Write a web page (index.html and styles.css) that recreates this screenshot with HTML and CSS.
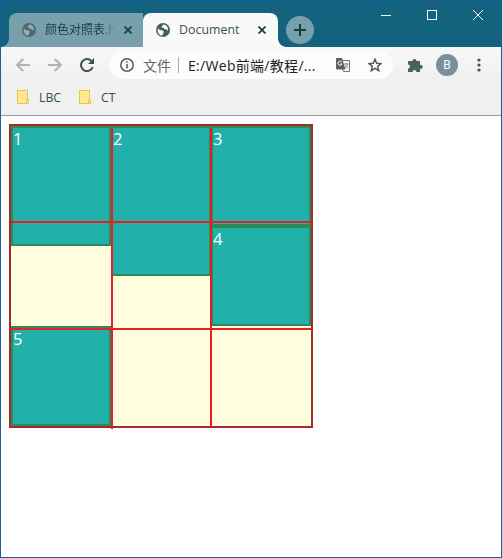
FILE: index.html
```html
<!DOCTYPE html>
<html lang="zh-CN">
<head>
<meta charset="utf-8">
<title>Document</title>
<link rel="stylesheet" href="styles.css">
</head>
<body>
<svg class="defs" width="0" height="0">
  <symbol id="globe" viewBox="0 0 14 14"><circle cx="7" cy="7" r="7" fill="currentColor"/><path class="land" d="M1.7 5.3 4.2 7.2h2.3l1 1.3v1.3L6.2 12.6C3.2 12.6 1.2 9.6 1.7 5.3zM7.4 1.5 5.8 3.4v1.4h2l.8 1.5h1.8l1.3 1.6c1-3.2-1-6-4.3-6.4z"/></symbol>
  <symbol id="cross" viewBox="0 0 8 8"><path d="M.5.5l7 7m0-7-7 7" stroke="currentColor" stroke-width="1.7"/></symbol>
  <symbol id="folder" viewBox="0 0 12 14"><path d="M.5.5h10v9h1v4H.5z" fill="#ffe793" stroke="#e8c545"/><path d="M9.5 13V9.5" stroke="#e8c545"/></symbol>
</svg>
<div class="window">
  <header class="titlebar">
    <div class="tab inactive">
      <svg class="globe"><use href="#globe"/></svg>
      <span class="title fade">颜色对照表.h</span>
      <svg class="close"><use href="#cross"/></svg>
    </div>
    <div class="tab active">
      <svg class="globe"><use href="#globe"/></svg>
      <span class="title">Document</span>
      <svg class="close"><use href="#cross"/></svg>
    </div>
    <div class="newtab"><svg width="12" height="12" viewBox="0 0 12 12"><path d="M6 0v12M0 6h12" stroke="#193d3d" stroke-width="2"/></svg></div>
    <div class="controls">
      <svg width="10" height="10" viewBox="0 0 10 10"><path d="M0 5.5h10"/></svg>
      <svg width="10" height="10" viewBox="0 0 10 10"><path d="M.5.5h9v9h-9z"/></svg>
      <svg width="10" height="10" viewBox="0 0 10 10"><path d="M0 0l10 10M10 0 0 10"/></svg>
    </div>
  </header>
  <div class="chrome">
    <div class="toolbar">
      <svg class="nav" width="14" height="14" viewBox="0 0 14 14"><path d="M14 7H1.5M7.2 1 1.2 7l6 6"/></svg>
      <svg class="nav" width="14" height="14" viewBox="0 0 14 14"><path d="M0 7h12.5M6.8 1l6 6-6 6"/></svg>
      <svg class="reload" width="14" height="14" viewBox="0 0 14 14"><path d="M11.5 3.1A6 6 0 1 0 12.7 9" fill="none" stroke="#40534f" stroke-width="2"/><path d="M14 0v6H8z" fill="#40534f"/></svg>
      <div class="address">
        <svg class="info" width="14" height="14" viewBox="0 0 14 14" fill="none" stroke="#555a5c" stroke-width="1.5"><circle cx="7" cy="7" r="6.2"/><path d="M7 6v4.5M7 3.2v1.6"/></svg>
        <span class="scheme">文件</span>
        <span class="divider"></span>
        <span class="url">E:/Web前端/教程/...</span>
        <svg class="translate" width="14" height="14" viewBox="0 0 14 14"><path d="M6 2.5h7.5v11H7.5L6 10" fill="#fafafa" stroke="#777"/><path d="M1 0h5l3.5 11.5H1a1 1 0 0 1-1-1V1a1 1 0 0 1 1-1z" fill="#5c6063"/><path d="M5.8 4A2.1 2.1 0 1 0 6 6H4.2" fill="none" stroke="#fff"/><path d="M8 6h4.500M10.2 5v1M11.700 6c-.3 1.800-1.300 2.900-2.500 3.700M9 7.200l3 3" fill="none" stroke="#666" stroke-width=".8"/></svg>
        <svg class="star" width="14" height="14" viewBox="0 0 14 14"><path d="M7 1.200l1.700 4 4.300.4-3.300 2.800 1 4.300L7 10.400l-3.700 2.300 1-4.300L1 5.600l4.300-.4z" fill="none" stroke="#555a5c" stroke-width="1.500"/></svg>
      </div>
      <svg class="puzzle" width="15" height="15" viewBox="0 0 15 15"><path d="M1 3h3.500a2 2 0 1 1 4 0H12v4h.8a1.900 1.900 0 0 1 0 3.800H12V14H8.500a2 2 0 0 0-4 0H0v-3.500a2 2 0 0 0 0-4V4a1 1 0 0 1 1-1z" fill="#4b625b"/></svg>
      <span class="avatar">B</span>
      <svg class="more" width="4" height="14" viewBox="0 0 4 14"><g fill="#40534f"><circle cx="2" cy="2" r="1.600"/><circle cx="2" cy="7" r="1.600"/><circle cx="2" cy="12" r="1.600"/></g></svg>
    </div>
    <nav class="bookmarks">
      <svg width="12" height="14"><use href="#folder"/></svg><span class="lbc">LBC</span>
      <svg width="12" height="14"><use href="#folder"/></svg><span>CT</span>
    </nav>
  </div>
  <main class="page">
    <div class="container">
      <div class="item one">1</div>
      <div class="item two">2</div>
      <div class="item">3</div>
      <div class="item four">4</div>
      <div class="item five">5</div>
      <i class="line v first"></i>
      <i class="line v second"></i>
      <i class="line h upper"></i>
      <i class="line h lower"></i>
    </div>
  </main>
</div>
</body>
</html>
```

FILE: styles.css
```css
* { box-sizing: border-box; }
body { margin: 0; font-family: "Open Sans", "Noto Sans CJK SC", sans-serif; }
svg { display: block; flex: none; }
.defs { position: absolute; }
.window {
  width: 502px;
  height: 558px;
  border: 1px solid #1a609f;
  background: #fff;
  overflow: hidden;
}
.titlebar {
  height: 46px;
  display: flex;
  align-items: flex-end;
  padding-left: 8px;
  background: #14637e;
}
.tab {
  height: 34px;
  display: flex;
  align-items: center;
  position: relative;
  color: #183c40;
}
.tab .globe { width: 14px; height: 14px; margin-left: 13px; color: #46605d; --land: #fafafa; }
.tab .close { width: 8px; height: 8px; margin-left: auto; color: #183b3b; }
.land { fill: var(--land); }
.inactive {
  width: 134px;
  background: #789fac;
  border-radius: 8px 0 0 0;
  padding-right: 11px;
}
.inactive .globe { color: #53666a; --land: #8fb0ba; }
.inactive::before, .active::after {
  content: "";
  position: absolute;
  bottom: 0;
  width: 8px;
  height: 8px;
}
.inactive::before { left: -8px; background: radial-gradient(circle at 0 0, #14637e 7.5px, #789fac 8px); }
.active::after { right: -8px; background: radial-gradient(circle at 100% 0, #14637e 7.5px, #f8f8f8 8px); }
.active {
  width: 135px;
  background: #f9f9f9;
  border-radius: 8px 8px 0 0;
  padding-right: 12px;
}
.title { margin-left: 9px; line-height: 20px; white-space: nowrap; }
.active .title { color: #3d5148; font-size: 12.3px; letter-spacing: .06px; }
.fade {
  width: 71px;
  overflow: hidden;
  font-size: 12px;
  background: linear-gradient(90deg, #183c40 78%, #789fac);
  -webkit-background-clip: text;
  background-clip: text;
  color: transparent;
}
.newtab {
  width: 28px;
  height: 28px;
  margin: 0 0 3px 8px;
  border-radius: 50%;
  background: #789fac;
  display: grid;
  place-items: center;
}
.controls { display: flex; gap: 36px; margin: 0 18px 27px auto; }
.controls path { fill: none; stroke: #fff; stroke-width: 1; }
.chrome {
  height: 69px;
  border-bottom: 1px solid #999;
  background: linear-gradient(#f8f8f8, #f0f0f0 28px);
}
.toolbar { height: 36px; display: flex; align-items: center; padding-left: 15px; }
.nav { margin-right: 18px; fill: none; stroke: #abb5b2; stroke-width: 2; }
.reload { margin-right: 15px; }
.address {
  width: 284px;
  height: 28px;
  border-radius: 14px;
  background: #fcfcfc;
  display: flex;
  align-items: center;
  padding-left: 11px;
  font-size: 14px;
  white-space: nowrap;
}
.scheme { margin-left: 9px; color: #666; }
.divider { width: 1px; height: 16px; margin: 0 9px 0 7px; background: #aaa; }
.url { width: 129px; color: #222; font-size: 14px; letter-spacing: .3px; }
.translate { margin-left: 19px; }
.star { margin-left: 18px; }
.puzzle { margin-left: 15px; }
.avatar {
  width: 22px;
  height: 22px;
  margin-left: 13px;
  border-radius: 50%;
  background: #78909c;
  color: #fff;
  font: 12px/22px Roboto, sans-serif;
  text-align: center;
}
.more { margin-left: 19px; }
.bookmarks {
  height: 28px;
  display: flex;
  align-items: center;
  padding-left: 16px;
  font-size: 12.3px;
  color: #334a4f;
}
.bookmarks span { margin-left: 10px; }
.bookmarks .lbc { width: 22px; margin-right: 18px; }
.page { padding: 8px; }
.container {
  position: relative;
  width: 304px;
  height: 304px;
  border: 2px solid brown;
  background: lightyellow;
  display: grid;
  grid-template: repeat(3, 100px) / repeat(3, 100px);
  align-items: start;
  color: #fff;
  font-size: 16.5px;
  line-height: 22px;
}
.item { height: 100px; border: 2px solid seagreen; background: lightseagreen; }
.one { height: 120px; }
.two { height: 150px; }
.four { grid-area: 2 / 3; }
.five { grid-area: 3 / 1; }
.line { position: absolute; background: #ed1c24; }
.v { width: 2px; top: 2px; }
.first { left: 100px; height: 301px; }
.second { left: 199px; height: 300px; }
.h { height: 2px; width: 300px; }
.upper { top: 95px; left: 0; }
.lower { top: 202px; left: -1px; width: 301px; }
```
